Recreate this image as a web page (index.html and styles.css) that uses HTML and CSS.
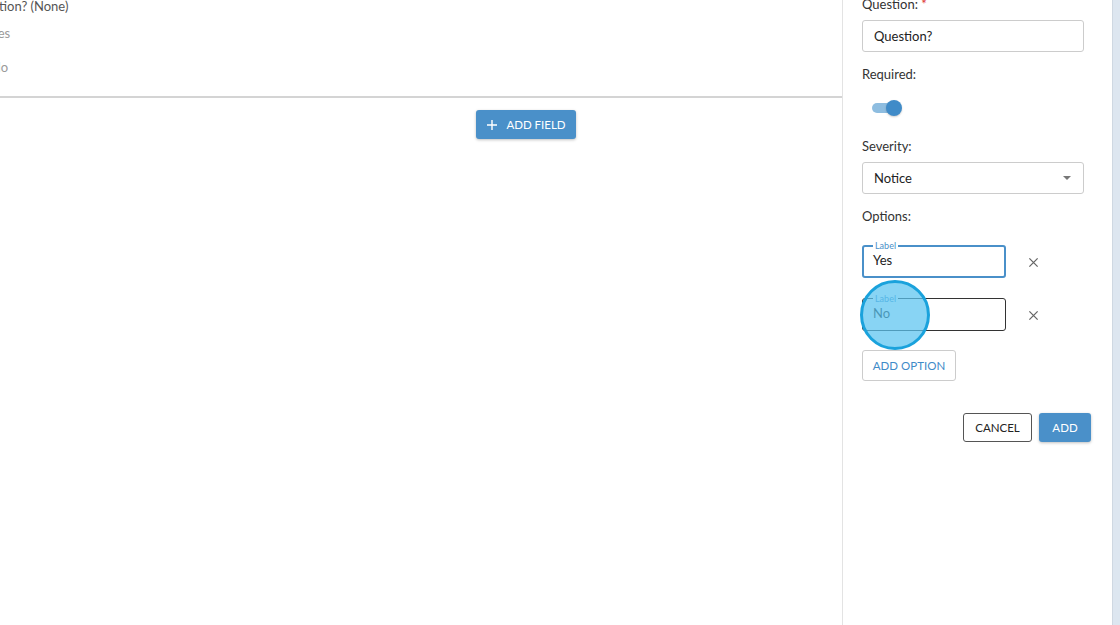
FILE: index.html
```html
<!DOCTYPE html>
<html lang="en">
<head>
    <meta charset="UTF-8">
    <title>Form builder</title>
    <link rel="stylesheet" href="styles.css">
</head>
<body>
    <div class="page">
        <div class="main">
            <div class="preview">
                <div class="preview-question">Question? (None)</div>
                <div class="preview-option">Yes</div>
                <div class="preview-option">No</div>
            </div>
            <div class="main-actions">
                <button class="btn btn-primary btn-add-field">
                    <svg width="12" height="12" viewBox="0 0 12 12"><path d="M6 1v10M1 6h10" stroke="#fff" stroke-width="1.4"/></svg>
                    ADD FIELD
                </button>
            </div>
        </div>

        <div class="panel">
            <div class="form-group">
                <label class="field-label">Question: <span class="req">*</span></label>
                <div class="input">Question?</div>
            </div>

            <div class="form-group">
                <label class="field-label">Required:</label>
                <div class="toggle">
                    <span class="toggle-track"></span>
                    <span class="toggle-knob"></span>
                </div>
            </div>

            <div class="form-group">
                <label class="field-label">Severity:</label>
                <div class="input select">
                    <span>Notice</span>
                    <span class="caret"></span>
                </div>
            </div>

            <div class="form-group options">
                <label class="field-label">Options:</label>
                <div class="option-row">
                    <fieldset class="outlined focused">
                        <legend>Label</legend>
                        <span>Yes</span>
                    </fieldset>
                    <svg class="remove" width="11" height="11" viewBox="0 0 12 12"><path d="M1.5 1.5l9 9M10.5 1.5l-9 9" stroke="#666" stroke-width="1.4"/></svg>
                </div>
                <div class="option-row">
                    <fieldset class="outlined">
                        <legend>Label</legend>
                        <span>No</span>
                    </fieldset>
                    <svg class="remove" width="11" height="11" viewBox="0 0 12 12"><path d="M1.5 1.5l9 9M10.5 1.5l-9 9" stroke="#666" stroke-width="1.4"/></svg>
                    <span class="click-marker"></span>
                </div>
                <button class="btn btn-outline">ADD OPTION</button>
            </div>

            <div class="panel-actions">
                <button class="btn btn-cancel">CANCEL</button>
                <button class="btn btn-primary">ADD</button>
            </div>
        </div>
        <div class="strip"></div>
    </div>
</body>
</html>
```

FILE: styles.css
```css
* {
    margin: 0;
    padding: 0;
    box-sizing: border-box;
    font-family: Lato, 'Liberation Sans', sans-serif;
}

body {
    background-color: #fff;
    overflow: hidden;
}

.page {
    display: flex;
    height: 625px;
    overflow: hidden;
}

.main {
    width: 842px;
    flex-shrink: 0;
    overflow: hidden;
}

.preview {
    margin: -3px 0 0 -31px;
    border-bottom: 2px solid #d4d4d4;
    height: 101px;
}

.preview-question {
    color: #555;
    font-size: 13px;
    line-height: 18px;
}

.preview-option {
    color: #9a9a9a;
    font-size: 13px;
    line-height: 18px;
    margin-left: 22px;
    margin-top: 9px;
}

.preview-option + .preview-option {
    margin-top: 16px;
}

.main-actions {
    padding: 12px 0 0 476px;
}

.btn {
    border-radius: 3px;
    font-size: 11.5px;
    cursor: pointer;
    display: inline-flex;
    align-items: center;
    justify-content: center;
    background: #fff;
}

.btn-primary {
    background-color: #4a90c9;
    color: #fff;
    border: none;
    box-shadow: 0 1px 3px rgba(0, 0, 0, 0.25);
}

.btn-add-field {
    width: 100px;
    height: 29px;
    gap: 8px;
}

.panel {
    width: 270px;
    flex-shrink: 0;
    border-left: 1px solid #e3e3e3;
    padding: 0 0 0 19px;
    margin-top: -4px;
}

.strip {
    flex: 1;
    background-color: #dde6f0;
    border-left: 1px solid #cfd8e2;
}

.form-group {
    margin-bottom: 14px;
}

.field-label {
    display: block;
    color: #333;
    font-size: 13px;
    line-height: 16px;
    margin-bottom: 8px;
}

.req {
    color: #d33;
}

.input {
    width: 222px;
    height: 32px;
    border: 1px solid #ccc;
    border-radius: 3px;
    padding: 0 11px;
    display: flex;
    align-items: center;
    font-size: 13px;
    color: #222;
}

.select {
    justify-content: space-between;
}

.caret {
    width: 0;
    height: 0;
    border-left: 4px solid transparent;
    border-right: 4px solid transparent;
    border-top: 4px solid #777;
    margin-right: 1px;
}

.toggle {
    position: relative;
    width: 42px;
    height: 28px;
    margin-top: 14px;
}

.toggle-track {
    position: absolute;
    left: 10px;
    top: 7px;
    width: 24px;
    height: 10px;
    border-radius: 5px;
    background-color: #8ebde0;
}

.toggle-knob {
    position: absolute;
    left: 24px;
    top: 4px;
    width: 16px;
    height: 16px;
    border-radius: 50%;
    background-color: #3f8bc8;
    box-shadow: 0 1px 2px rgba(0, 0, 0, 0.2);
}

.options .field-label {
    margin-bottom: 22px;
}

.option-row {
    position: relative;
    display: flex;
    align-items: center;
    gap: 17px;
    margin-bottom: 21px;
}

.outlined {
    width: 144px;
    height: 38px;
    border: 1px solid #333;
    border-radius: 3px;
    padding: 0 10px;
    margin-top: -6px;
    font-size: 13px;
    color: #222;
}

.outlined legend {
    font-size: 9px;
    color: #4a90c9;
    padding: 0 2px;
    line-height: 11px;
}

.outlined span {
    display: block;
    line-height: 18px;
}

.focused {
    border: 2px solid #4a90c9;
    padding: 0 9px;
}

.remove {
    margin-left: 5px;
}

.click-marker {
    position: absolute;
    left: -2px;
    top: -19px;
    width: 70px;
    height: 70px;
    border-radius: 50%;
    background-color: rgba(90, 195, 240, 0.72);
    border: 3px solid #1aa2dc;
}

.btn-outline {
    width: 94px;
    height: 31px;
    border: 1px solid #ccc;
    color: #3f8bc8;
    margin-top: -2px;
}

.panel-actions {
    display: flex;
    justify-content: flex-end;
    gap: 7px;
    padding-right: 21px;
    margin-top: 32px;
}

.btn-cancel {
    width: 69px;
    height: 29px;
    border: 1px solid #555;
    color: #222;
}

.panel-actions .btn-primary {
    width: 52px;
    height: 29px;
}
```
